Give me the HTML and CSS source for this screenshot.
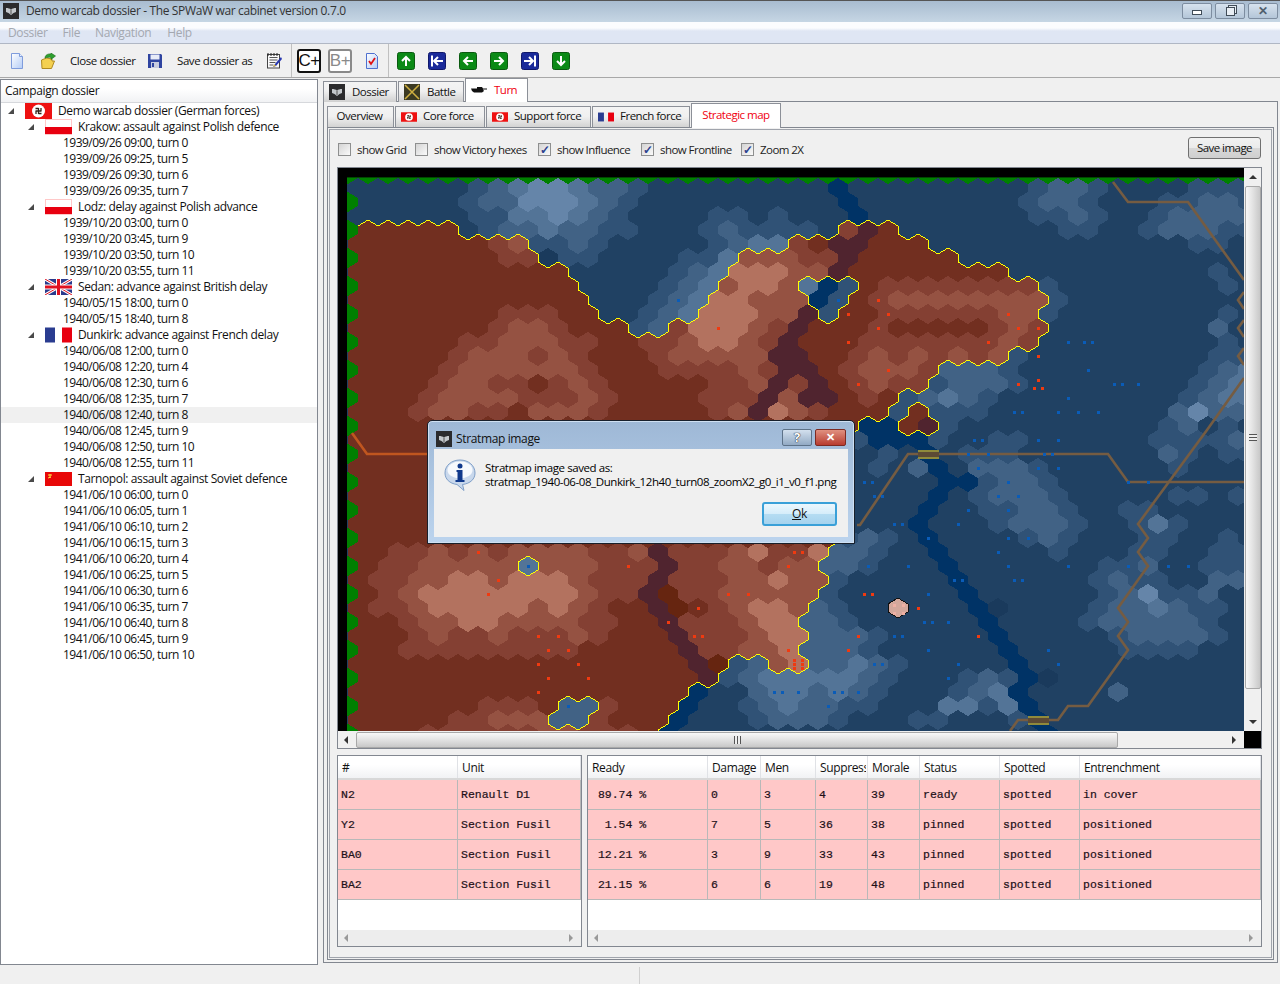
FILE: index.html
```html
<!DOCTYPE html>
<html lang="en">
<head>
<meta charset="utf-8">
<title>Demo warcab dossier - The SPWaW war cabinet version 0.7.0</title>
<link rel="stylesheet" href="styles.css">
</head>
<body>
<svg class="defs" width="0" height="0" aria-hidden="true">
  <linearGradient id="pg" x1="0" y1="0" x2="1" y2="1"><stop offset="0" stop-color="#ffffff"/><stop offset="1" stop-color="#b4ccf6"/></linearGradient>
  <symbol id="i-app" viewBox="0 0 16 16"><rect width="16" height="16" fill="#2b2b2d"/><path d="M3 5c2 0 4 .5 5 1.500C9 5.500 11 5 13 5v4l-2.500 1L8 12 5.500 10 3 9z" fill="#c4c8cc"/><path d="M8 6.500V11" stroke="#555" stroke-width="1"/></symbol>
  <symbol id="i-battle" viewBox="0 0 16 16"><rect width="16" height="16" fill="#3c3a22"/><path d="M1 1l14 14M15 1L1 15" stroke="#d0b040" stroke-width="1.500"/></symbol>
  <symbol id="i-tank" viewBox="0 0 16 16"><path d="M0 6.500h6V5h5l1 1.500h4v1h-4l1 1.500-2 1.500H3L1 9z" fill="#111"/></symbol>
  <symbol id="f-de" viewBox="0 0 27 16"><rect width="27" height="16" fill="#ee1111"/><circle cx="13.500" cy="8" r="6.500" fill="#fff"/><path d="M10.500 8h6M13.500 5v6M10.500 5.500h3M16.500 10.500h-3M11 11V8M16 5v3" stroke="#33241a" stroke-width="1.300" fill="none"/></symbol>
  <symbol id="f-pl" viewBox="0 0 27 16"><rect x=".5" y=".5" width="26" height="15" fill="#fff" stroke="#ffc8c8"/><rect y="8" width="27" height="7" fill="#e80010"/></symbol>
  <symbol id="f-uk" viewBox="0 0 27 16"><rect width="27" height="16" fill="#2a3a8c"/><path d="M0 0l27 16M27 0L0 16" stroke="#fff" stroke-width="3"/><path d="M0 0l27 16M27 0L0 16" stroke="#e01020" stroke-width="1"/><path d="M13.500 0v16M0 8h27" stroke="#fff" stroke-width="5"/><path d="M13.500 0v16M0 8h27" stroke="#e01020" stroke-width="3"/></symbol>
  <symbol id="f-fr" viewBox="0 0 27 16"><rect width="10" height="15" y=".5" fill="#2a3c90"/><rect x="17" y=".5" width="10" height="15" fill="#e80010"/></symbol>
  <symbol id="f-su" viewBox="0 0 27 16"><rect width="27" height="14" y="1" fill="#e80808"/><path d="M3 4h4M5 3v4M3 7l3-1" stroke="#ffe040" stroke-width="1" fill="none"/></symbol>
  <symbol id="t-new" viewBox="0 0 16 16"><path d="M2.500.5h8l3 3v12h-11z" fill="url(#pg)" stroke="#7f9cdc"/><path d="M10.500.5v3h3" fill="#e8f0ff" stroke="#7f9cdc"/></symbol>
  <symbol id="t-open" viewBox="0 0 16 16"><path d="M1.500 7l5-2 5.500 1v2h2.500l-3 7.500H2z" fill="#f4d050" stroke="#b08a20"/><path d="M5 5c0-3 3-4.500 6-4V0l4.500 3L11 6.500V4.500c-2-.5-4 0-6 .5z" fill="#2ea02e" stroke="#176a17" stroke-width=".6"/></symbol>
  <symbol id="t-save" viewBox="0 0 16 16"><path d="M1 1h13l1 1v13H1z" fill="#2f44a0"/><rect x="3.500" y="1.500" width="9" height="5" fill="#e8ecf8"/><rect x="4" y="9" width="8" height="6" fill="#c8cce0"/><rect x="5" y="10" width="2" height="4" fill="#2f44a0"/></symbol>
  <symbol id="t-notes" viewBox="0 0 16 16"><rect x="1.500" y="1.500" width="12" height="13.500" fill="#fafafa" stroke="#444"/><path d="M3.500 4.500h8M3.500 7h8M3.500 9.500h6M3.500 12h4" stroke="#555"/><path d="M2 0v3M5 0v3M8 0v3M11 0v3" stroke="#222"/><path d="M15 4l-6 7-2 3 3-1 6-7z" fill="#2838b0"/><path d="M7 14l1.500-2.500 1.500 1z" fill="#e8c020"/></symbol>
  <symbol id="t-check" viewBox="0 0 16 16"><path d="M2.500.5h8l3 3v12h-11z" fill="url(#pg)" stroke="#4f70cf"/><path d="M5 8l2 3 4-6" fill="none" stroke="#e01010" stroke-width="1.800"/></symbol>
  <symbol id="a-up" viewBox="0 0 18 18"><rect x=".5" y=".5" width="17" height="17" rx="2" fill="#0b8a16" stroke="#0a5a10"/><path d="M9 14V5M5 9l4-4 4 4" fill="none" stroke="#fff" stroke-width="2"/></symbol>
  <symbol id="a-down" viewBox="0 0 18 18"><rect x=".5" y=".5" width="17" height="17" rx="2" fill="#0b8a16" stroke="#0a5a10"/><path d="M9 4v9M5 9l4 4 4-4" fill="none" stroke="#fff" stroke-width="2"/></symbol>
  <symbol id="a-left" viewBox="0 0 18 18"><rect x=".5" y=".5" width="17" height="17" rx="2" fill="#0b8a16" stroke="#0a5a10"/><path d="M14 9H5M9 5L5 9l4 4" fill="none" stroke="#fff" stroke-width="2"/></symbol>
  <symbol id="a-right" viewBox="0 0 18 18"><rect x=".5" y=".5" width="17" height="17" rx="2" fill="#0b8a16" stroke="#0a5a10"/><path d="M4 9h9M9 5l4 4-4 4" fill="none" stroke="#fff" stroke-width="2"/></symbol>
  <symbol id="a-first" viewBox="0 0 18 18"><rect x=".5" y=".5" width="17" height="17" rx="2" fill="#1a2a9a" stroke="#10186a"/><path d="M4 3.500v11M15 9H6M10 5L6 9l4 4" fill="none" stroke="#fff" stroke-width="2"/></symbol>
  <symbol id="a-last" viewBox="0 0 18 18"><rect x=".5" y=".5" width="17" height="17" rx="2" fill="#1a2a9a" stroke="#10186a"/><path d="M14 3.500v11M3 9h9M8 5l4 4-4 4" fill="none" stroke="#fff" stroke-width="2"/></symbol>
  <symbol id="i-info" viewBox="0 0 32 32"><path d="M16 1C7.500 1 1 6.500 1 14c0 6 4.500 10.500 12 11.500l7 6-1.500-6C26.500 24.500 31 20 31 14 31 6.500 24.500 1 16 1z" fill="#c9d8ec" stroke="#7f9fc8"/><ellipse cx="16" cy="11" rx="12.500" ry="8.500" fill="#f6f9fd"/><circle cx="16" cy="7" r="2.500" fill="#10398c"/><path d="M12.500 11h6v10h2v2h-9v-2h2v-8h-1z" fill="#10398c"/></symbol>
</svg>

<header class="titlebar">
  <svg class="app-icon"><use href="#i-app"/></svg>
  <span class="title-text">Demo warcab dossier - The SPWaW war cabinet version 0.7.0</span>
  <div class="win-buttons">
    <span class="win-btn"><span class="glyph-min"></span></span>
    <span class="win-btn"><span class="glyph-max"></span></span>
    <span class="win-btn win-x">✕</span>
  </div>
</header>

<nav class="menubar">
  <span>Dossier</span><span>File</span><span>Navigation</span><span>Help</span>
</nav>

<div class="toolbar">
  <div class="tool-group group-file">
    <svg class="ticon i1"><use href="#t-new"/></svg>
    <svg class="ticon i2"><use href="#t-open"/></svg>
    <span class="tool-label l1">Close dossier</span>
    <svg class="ticon i3"><use href="#t-save"/></svg>
    <span class="tool-label l2">Save dossier as</span>
    <svg class="ticon i4"><use href="#t-notes"/></svg>
  </div>
  <div class="tool-group group-grade">
    <span class="grade on">C+</span>
    <span class="grade">B+</span>
    <svg class="ticon i5"><use href="#t-check"/></svg>
  </div>
  <div class="tool-group group-nav">
    <svg class="aicon"><use href="#a-up"/></svg>
    <svg class="aicon"><use href="#a-first"/></svg>
    <svg class="aicon"><use href="#a-left"/></svg>
    <svg class="aicon"><use href="#a-right"/></svg>
    <svg class="aicon"><use href="#a-last"/></svg>
    <svg class="aicon"><use href="#a-down"/></svg>
  </div>
</div>

<main class="main">
  <aside class="tree-pane">
    <div class="tree-head">Campaign dossier</div>
    <div class="tree">
      <div class="row lvl0"><i class="twist"></i><svg class="flag"><use href="#f-de"/></svg>Demo warcab dossier (German forces)</div>
      <div class="row lvl1"><i class="twist"></i><svg class="flag"><use href="#f-pl"/></svg>Krakow: assault against Polish defence</div>
      <div class="row leaf">1939/09/26 09:00, turn 0</div>
      <div class="row leaf">1939/09/26 09:25, turn 5</div>
      <div class="row leaf">1939/09/26 09:30, turn 6</div>
      <div class="row leaf">1939/09/26 09:35, turn 7</div>
      <div class="row lvl1"><i class="twist"></i><svg class="flag"><use href="#f-pl"/></svg>Lodz: delay against Polish advance</div>
      <div class="row leaf">1939/10/20 03:00, turn 0</div>
      <div class="row leaf">1939/10/20 03:45, turn 9</div>
      <div class="row leaf">1939/10/20 03:50, turn 10</div>
      <div class="row leaf">1939/10/20 03:55, turn 11</div>
      <div class="row lvl1"><i class="twist"></i><svg class="flag"><use href="#f-uk"/></svg>Sedan: advance against British delay</div>
      <div class="row leaf">1940/05/15 18:00, turn 0</div>
      <div class="row leaf">1940/05/15 18:40, turn 8</div>
      <div class="row lvl1"><i class="twist"></i><svg class="flag"><use href="#f-fr"/></svg>Dunkirk: advance against French delay</div>
      <div class="row leaf">1940/06/08 12:00, turn 0</div>
      <div class="row leaf">1940/06/08 12:20, turn 4</div>
      <div class="row leaf">1940/06/08 12:30, turn 6</div>
      <div class="row leaf">1940/06/08 12:35, turn 7</div>
      <div class="row leaf selected">1940/06/08 12:40, turn 8</div>
      <div class="row leaf">1940/06/08 12:45, turn 9</div>
      <div class="row leaf">1940/06/08 12:50, turn 10</div>
      <div class="row leaf">1940/06/08 12:55, turn 11</div>
      <div class="row lvl1"><i class="twist"></i><svg class="flag"><use href="#f-su"/></svg>Tarnopol: assault against Soviet defence</div>
      <div class="row leaf">1941/06/10 06:00, turn 0</div>
      <div class="row leaf">1941/06/10 06:05, turn 1</div>
      <div class="row leaf">1941/06/10 06:10, turn 2</div>
      <div class="row leaf">1941/06/10 06:15, turn 3</div>
      <div class="row leaf">1941/06/10 06:20, turn 4</div>
      <div class="row leaf">1941/06/10 06:25, turn 5</div>
      <div class="row leaf">1941/06/10 06:30, turn 6</div>
      <div class="row leaf">1941/06/10 06:35, turn 7</div>
      <div class="row leaf">1941/06/10 06:40, turn 8</div>
      <div class="row leaf">1941/06/10 06:45, turn 9</div>
      <div class="row leaf">1941/06/10 06:50, turn 10</div>
    </div>
  </aside>

  <section class="right">
    <div class="tabs outer-tabs">
      <span class="tab t-dossier"><svg class="tab-icon"><use href="#i-app"/></svg>Dossier</span>
      <span class="tab t-battle"><svg class="tab-icon"><use href="#i-battle"/></svg>Battle</span>
      <span class="tab t-turn active"><svg class="tab-icon"><use href="#i-tank"/></svg>Turn</span>
    </div>
    <div class="outer-pane">
      <div class="tabs inner-tabs">
        <span class="tab t-over">Overview</span>
        <span class="tab t-core"><svg class="tab-flag"><use href="#f-de"/></svg>Core force</span>
        <span class="tab t-supp"><svg class="tab-flag"><use href="#f-de"/></svg>Support force</span>
        <span class="tab t-fren"><svg class="tab-flag"><use href="#f-fr"/></svg>French force</span>
        <span class="tab t-strat active">Strategic map</span>
      </div>
      <div class="inner-pane">
        <div class="options">
          <label class="opt o1"><i class="cb"></i>show Grid</label>
          <label class="opt o2"><i class="cb"></i>show Victory hexes</label>
          <label class="opt o3"><i class="cb checked">✓</i>show Influence</label>
          <label class="opt o4"><i class="cb checked">✓</i>show Frontline</label>
          <label class="opt o5"><i class="cb checked">✓</i>Zoom 2X</label>
          <span class="btn save-btn">Save image</span>
        </div>
        <div class="map-frame">
          <svg id="map" class="map" viewBox="338 168 906 563" width="906" height="563" shape-rendering="crispEdges"></svg>
          <div class="vscroll">
            <span class="arrow up"></span>
            <span class="vthumb"><span class="vgrip"></span></span>
            <span class="arrow down"></span>
          </div>
          <div class="hscroll">
            <span class="arrow left"></span>
            <span class="hthumb"><span class="hgrip"></span></span>
            <span class="arrow right"></span>
          </div>
          <div class="corner"></div>
        </div>
        <div class="tables">
          <div class="table table-a">
            <div class="thead cols-a"><span>#</span><span>Unit</span></div>
            <div class="trow cols-a"><span>N2</span><span>Renault D1</span></div>
            <div class="trow cols-a"><span>Y2</span><span>Section Fusil</span></div>
            <div class="trow cols-a"><span>BA0</span><span>Section Fusil</span></div>
            <div class="trow cols-a"><span>BA2</span><span>Section Fusil</span></div>
            <div class="tscroll"><span class="arrow left dim"></span><span class="arrow right dim"></span></div>
          </div>
          <div class="table table-b">
            <div class="thead cols-b"><span>Ready</span><span>Damage</span><span>Men</span><span><b class="clip">Suppress</b></span><span>Morale</span><span>Status</span><span>Spotted</span><span>Entrenchment</span></div>
            <div class="trow cols-b"><span> 89.74 %</span><span>0</span><span>3</span><span>4</span><span>39</span><span>ready</span><span>spotted</span><span>in cover</span></div>
            <div class="trow cols-b"><span>  1.54 %</span><span>7</span><span>5</span><span>36</span><span>38</span><span>pinned</span><span>spotted</span><span>positioned</span></div>
            <div class="trow cols-b"><span> 12.21 %</span><span>3</span><span>9</span><span>33</span><span>43</span><span>pinned</span><span>spotted</span><span>positioned</span></div>
            <div class="trow cols-b"><span> 21.15 %</span><span>6</span><span>6</span><span>19</span><span>48</span><span>pinned</span><span>spotted</span><span>positioned</span></div>
            <div class="tscroll"><span class="arrow left dim"></span><span class="arrow right dim"></span></div>
          </div>
        </div>
      </div>
    </div>
  </section>
</main>

<footer class="statusbar"><span class="status-sep"></span></footer>

<div class="dialog">
  <div class="dlg-title">
    <svg class="app-icon"><use href="#i-app"/></svg>
    <span class="dlg-caption">Stratmap image</span>
    <span class="dlg-help">?</span>
    <span class="dlg-close">✕</span>
  </div>
  <div class="dlg-body">
    <div class="dlg-msg">
      <svg class="dlg-info"><use href="#i-info"/></svg>
      <p>Stratmap image saved as:<br>stratmap_1940-06-08_Dunkirk_12h40_turn08_zoomX2_g0_i1_v0_f1.png</p>
    </div>
    <div class="dlg-actions"><span class="btn ok-btn"><u>O</u>k</span></div>
  </div>
</div>

<script src="map.js"></script>
</body>
</html>
```

FILE: styles.css
```css
* { box-sizing: border-box; }
html, body { margin: 0; height: 100%; }
body {
  width: 1280px; height: 984px; overflow: hidden; position: relative;
  display: flex; flex-direction: column;
  background: #f0f0f0; color: #111;
  font: 12px/16px "Open Sans", "Noto Sans", sans-serif;
  letter-spacing: -.36px;
}
.defs { position: absolute; }

.titlebar {
  height: 22px; flex: none; display: flex; align-items: center; padding: 0 2px 2px 3px;
  background: linear-gradient(#a8bcd0, #c6d6e4); border-top: 1px solid #555;
}
.app-icon { width: 16px; height: 16px; flex: none; }
.title-text { margin-left: 7px; color: #333; }
.win-buttons { margin-left: auto; display: flex; gap: 3px; margin-top: 1px; }
.win-btn {
  width: 30px; height: 16px; border: 1px solid #7d8da0; border-radius: 2px;
  background: linear-gradient(#d6e2ee, #b4c6d8); display: flex; align-items: center; justify-content: center;
  color: #50606e; font-size: 12px; font-weight: 700;
}
.glyph-min { width: 10px; height: 5px; border: 1px solid #404c58; background: #fff; margin-top: 3px; }
.glyph-max { width: 9px; height: 9px; border: 1px solid #404c58; background: #e8eef4; box-shadow: 2px -2px 0 -1px #e8eef4, 2px -2px 0 0 #404c58; }

.menubar {
  height: 22px; flex: none; display: flex; padding: 3px 0 0 8px; gap: 15px; color: #a4a8b0;
  background: linear-gradient(#fbfcfe 0, #fbfcfe 6px, #dfe6f4 9px, #dfe6f4 100%);
  border-bottom: 1px solid #b0b7c4;
}
.menubar span:last-child { margin-left: 1px; }

.toolbar {
  height: 34px; flex: none; display: flex; border-bottom: 1px solid #a8a8a8;
}
.tool-group { display: flex; align-items: center; border-right: 1px solid #c0c0c0; }
.group-file { width: 292px; padding-left: 9px; }
.group-grade { width: 97px; padding-left: 5px; }
.group-nav { padding-left: 8px; gap: 13px; border-right: 0; }
.ticon { width: 16px; height: 16px; flex: none; }
.i2 { margin-left: 15px; }
.tool-label { color: #111; white-space: nowrap; flex: none; font-size: 11.500px; letter-spacing: -.42px; }
.l1 { margin-left: 14px; width: 63px; }
.i3 { margin-left: 14px; }
.l2 { margin-left: 14px; width: 76px; }
.i4 { margin-left: 13px; }
.grade {
  width: 24px; height: 24px; border: 2px solid #111; border-radius: 3px; background: #fff;
  display: flex; align-items: center; justify-content: center; font-size: 17px; letter-spacing: -.5px;
  color: #111; margin-right: 7px; font-family: "Liberation Sans", sans-serif; flex: none;
}
.grade:not(.on) { border: 2px solid #8a8a8a; color: #8a8a8a; }
.i5 { margin-left: 5px; }
.aicon { width: 18px; height: 18px; flex: none; }

.main { flex: 1; min-height: 0; display: flex; padding-top: 1px; }
.tree-pane { width: 318px; flex: none; border: 1px solid #828790; background: #fff; }
.tree-head { height: 23px; line-height: 21px; padding-left: 4px; border-bottom: 1px solid #d6d8dc; background: linear-gradient(#fff, #fff 40%, #f1f2f4); }
.row { height: 16px; display: flex; align-items: center; white-space: nowrap; letter-spacing: -.38px; }
.lvl0 { padding-left: 7px; }
.lvl1 { padding-left: 27px; }
.leaf { padding-left: 62px; letter-spacing: -.53px; }
.selected { background: #f0f0f0; }
.twist { width: 0; height: 0; border-style: solid; border-width: 0 0 6px 6px; border-color: transparent transparent #4a4a4a transparent; margin-right: 11px; flex: none; }
.flag { width: 27px; height: 16px; margin-right: 6px; flex: none; }

.right { margin-left: 5px; width: 955px; display: flex; flex-direction: column; }
.tabs { display: flex; align-items: flex-end; flex: none; position: relative; }
.tab {
  display: flex; align-items: center; border: 1px solid #8c9098; border-bottom: 0; margin-right: 1px; white-space: nowrap;
  background: linear-gradient(#f4f4f4, #f0f0f0 45%, #d0d0d0); font-size: 11.500px; letter-spacing: -.5px;
}
.tab.active { background: #fff; color: #f00010; z-index: 1; }
.outer-tabs { height: 23px; margin-bottom: -1px; }
.outer-tabs .tab { height: 21px; }
.outer-tabs .tab.active { height: 24px; padding-bottom: 1px; }
.tab-icon { width: 16px; height: 16px; margin: 0 7px 0 5px; flex: none; }
.t-dossier { width: 74px; }
.t-battle { width: 66px; }
.t-turn { width: 63px; }
.outer-pane { height: 862px; border: 1px solid #828790; background: #f0f0f0; padding: 3px 3px 0 3px; flex: none; }
.inner-tabs { height: 23px; margin-bottom: -1px; }
.inner-tabs .tab { height: 22px; justify-content: center; padding-bottom: 4px; }
.inner-tabs .tab.active { height: 25px; padding-bottom: 3px; }
.inner-tabs .t-over { width: 67px; padding-right: 2px; }
.inner-tabs .t-core { width: 90px; justify-content: flex-start; padding-left: 5px; }
.inner-tabs .t-supp { width: 105px; justify-content: flex-start; padding-left: 5px; }
.inner-tabs .t-fren { width: 98px; justify-content: flex-start; padding-left: 5px; }
.t-strat { width: 90px; }
.tab-flag { width: 16px; height: 10px; margin-right: 6px; flex: none; margin-top: 2px; }
.inner-pane {
  height: 833px; border: 1px solid #828790; padding: 0 10px 0 9px; position: relative;
  display: flex; flex-direction: column;
  box-shadow: inset 0 0 0 1px #f0f0f0, inset 0 0 0 2px #a0a4ac;
}
.options { height: 39px; flex: none; display: flex; align-items: center; padding-top: 4px; position: relative; font-size: 11.500px; letter-spacing: -.55px; }
.opt { display: flex; align-items: center; color: #222; }
.cb {
  width: 13px; height: 13px; border: 1px solid #8e8f8f; background: linear-gradient(135deg, #d4d4d4, #fafafa);
  margin-right: 6px; font-style: normal; font-size: 12px; line-height: 11px; text-align: center; color: #2a3f8e; font-weight: 700; margin-left: 1px; letter-spacing: 0;
}
.o1 { width: 77px; }
.o2 { width: 123px; }
.o3 { width: 103px; }
.o4 { width: 100px; }
.btn {
  display: flex; align-items: center; justify-content: center; border: 1px solid #707070; border-radius: 3px;
  background: linear-gradient(#f2f2f2 0, #ebebeb 48%, #d8d8d8 52%, #cfcfcf 100%);
}
.save-btn { margin-left: auto; width: 73px; height: 22px; margin-right: 2px; margin-top: -3px; }

.map-frame {
  width: 925px; height: 582px; flex: none; border: 1px solid #828790; display: grid;
  grid-template-columns: 906px 17px; grid-template-rows: 563px 17px; background: #f0f0f0;
}
.map { display: block; background: #000; }
.vscroll { display: flex; flex-direction: column; align-items: center; background: #f0f0f0; }
.hscroll { display: flex; align-items: center; background: #f0f0f0; }
.corner { background: #000; }
.arrow { width: 0; height: 0; border-style: solid; flex: none; }
.arrow.up { border-width: 0 4px 4px; border-color: transparent transparent #333; margin: 7px 0 7px; }
.arrow.down { border-width: 4px 4px 0; border-color: #333 transparent transparent; margin: auto 0 7px; }
.arrow.left { border-width: 4px 4px 4px 0; border-color: transparent #333 transparent transparent; margin: 0 0 0 6px; }
.arrow.right { border-width: 4px 0 4px 4px; border-color: transparent transparent transparent #333; margin: 0 8px 0 auto; }
.arrow.dim { opacity: .45; }
.vthumb { width: 16px; height: 503px; border: 1px solid #a8a8a8; border-radius: 2px; background: linear-gradient(90deg, #f8f8f8, #e4e4e4 45%, #c8c8c8); display: flex; align-items: center; justify-content: center; }
.hthumb { width: 762px; height: 16px; margin-left: 8px; border: 1px solid #a8a8a8; border-radius: 2px; background: linear-gradient(#f8f8f8, #e4e4e4 45%, #c8c8c8); display: flex; align-items: center; justify-content: center; }
.vgrip { width: 8px; height: 7px; background: repeating-linear-gradient(#555 0 1px, #eee 1px 3px); }
.hgrip { width: 7px; height: 8px; background: repeating-linear-gradient(90deg, #555 0 1px, #eee 1px 3px); }

.tables { display: flex; gap: 5px; margin-top: 6px; flex: none; height: 192px; }
.table { border: 1px solid #828790; background: #fff; display: flex; flex-direction: column; position: relative; }
.table-a { width: 245px; }
.table-b { width: 675px; }
.cols-a, .cols-b { display: grid; }
.cols-a { grid-template-columns: 120px 1fr; }
.cols-b { grid-template-columns: 120px 53px 55px 52px 52px 80px 80px 1fr; }
.thead { height: 24px; background: linear-gradient(#fff, #fff 40%, #f1f2f4); border-bottom: 2px solid #d8d8d8; line-height: 24px; }
.thead span { padding-left: 4px; border-right: 1px solid #e0e2e6; overflow: hidden; white-space: nowrap; }
.clip { display: block; width: 46px; overflow: hidden; font-weight: 400; }
.trow { height: 30px; background: #ffc8c8; border-bottom: 1px solid #b8b8b8; }
.trow span { padding-left: 3px; border-right: 1px solid #b8b8b8; white-space: pre; color: #221018; font: 11.500px/29px "Liberation Mono", monospace; letter-spacing: 0; -webkit-text-stroke: .2px #221018; }
.tscroll { margin-top: auto; height: 16px; background: #ededed; display: flex; align-items: center; }

.statusbar { height: 19px; flex: none; display: flex; padding-left: 639px; padding-top: 2px; }
.status-sep { width: 1px; height: 17px; background: #d0d0d0; }

.dialog {
  position: absolute; left: 427px; top: 420px; width: 428px; height: 124px;
  border: 1px solid #18202c; border-radius: 5px 5px 0 0; padding: 0 6px 6px 6px;
  background: linear-gradient(#9eb8d6, #bcd4ee); box-shadow: inset 0 0 0 1px #cfe0f2;
  display: flex; flex-direction: column;
}
.dlg-title { height: 28px; flex: none; display: flex; align-items: center; padding: 8px 2px 0 2px; }
.dlg-caption { margin-left: 4px; color: #111; }
.dlg-help, .dlg-close { height: 17px; display: flex; align-items: center; justify-content: center; border: 1px solid #5d7288; border-radius: 2px; font-weight: 700; margin-top: -4px; }
.dlg-help { width: 30px; margin-left: auto; background: linear-gradient(#d3e0ee, #92aac4); color: #fff; text-shadow: 0 0 1px #112, 0 0 1px #112; font-size: 13px; }
.dlg-close { width: 31px; margin-left: 3px; background: linear-gradient(#e09080, #b83c30); color: #fff; font-size: 11px; border-color: #7d2a22; }
.dlg-body { flex: 1; background: #f0f0f0; display: flex; flex-direction: column; }
.dlg-msg { display: flex; padding: 10px 0 0 10px; height: 53px; flex: none; }
.dlg-info { width: 32px; height: 32px; flex: none; }
.dlg-msg p { margin: 0 0 0 9px; line-height: 14px; padding-top: 2px; white-space: nowrap; font-size: 11.500px; letter-spacing: -.41px; color: #000; }
.dlg-actions { display: flex; justify-content: flex-end; padding-right: 11px; }
.ok-btn { width: 75px; height: 24px; border: 2px solid #3aa0d8; background: linear-gradient(#ecf7fd, #d6edfa 48%, #b5dcf2 52%, #a6d3ee); }
```

FILE: map.js
```js
// Strategic map: hex terrain drawn from a compact description of each row.
// Row format: "<fill> <col> <chars> <col> <chars> ..."
// a-e blue levels, z dark blue, r river; 0-3 brown levels, x dark river, y deep brown.
var Z24 = '000000000000000000000000', Z25 = Z24 + '0', Z17 = '00000000000000000';
var ROWS = [
  "a 6 bcdeedccb 24 r 34 bccb 42 bbb",
  "a 6 bcceeedcb 25 r 34 bccb 41 bbccb",
  "a 6 bbddedcb 18 bb 21 b 25 r 34 bbcb 40 bcccc",
  "a 1 00000 6 abccdccbb 18 bcbbb 23 ba1x0 36 bb 40 bcccbb",
  "a 0 0000000 7 12 9 bbcb 18 bcdd 22 10xx000 42 bb",
  "a 1 000000011 10 zbb 17 bbd222 23 11x00000",
  "a 0 00000000000 16 bcd3332 23 2x 25 00000000 43 b",
  "a 1 00000000000 16 bcd2332 23 drb0 27 11111111 35 b 44 b",
  "a 0 000000000000 15 bcd33222 23 rb 25 0 26 1 27 22222222 35 b",
  "a 1 0000000 8 111 11 00 15 bcd333 21 22x 24 b 25 00 27 111111 33 22 35 b 44 b",
  "a 0 0000000 7 1221 11 000 14 bc 16 1 17 3332 21 1x 23 000 26 1 27 00000 32 1 33 2 34 1 43 c",
  "a 1 00000 6 1122211 13 00 15 11 17 2 18 33 20 21x 23 000 26 1111111 33 21 44 b",
  "a 0 00000 5 1222121 12 000 15 12222 20 2xx 23 001 26 2121212 33 b 43 bb",
  "a 1 0000 5 1222222 12 1 13 000 16 1111 20 21xx 24 01 26 222 29 1 30 cccb 43 bcd",
  "a 0 0000 4 122110121 13 00000 18 112x1 23 x01211 29 bcccb 42 bcd",
  "a 1 000 4 1222211121 14 0000 18 111x2 23 xx010 28 bcdcb 42 bcdd",
  "a 0 000 3 1221102221 13 00000 18 12x32 23 1000 27 b0b 30 bb 41 cecc",
  "a 1 " + Z25 + " 26 rr0x 30 b 41 b 42 c 44 b",
  "a 0 " + Z25 + " 25 brrrb 32 bb 40 bbbbc",
  "a 1 " + Z24 + " 27 b 29 r 31 bbb 41 cb 44 bb",
  "a 0 " + Z25 + " 26 b 28 cr 31 cccb 41 b",
  "a 1 " + Z24 + " 30 rr 32 bccb",
  "a 0 " + Z25 + " 29 r 31 bcccb 41 bb 44 b",
  "a 1 " + Z24 + " 29 r 32 bbccb 39 bb",
  "a 0 " + Z25 + " 28 r 32 bcccb 39 bdb",
  "a 1 " + Z24 + " 25 bcb 29 r 34 bcb 40 bb 44 b",
  "a 0 00112121222211 14 2x111 19 23113 24 ccb 29 r 35 b 39 bb 43 bb",
  "a 1 01122222 9 d 10 222111x11 19 22122 24 ccb 30 r 38 bbc 43 bbb",
  "a 0 01122332333211 14 1x111 19 22322 24 b 30 r 37 bcbb 43 cc",
  "a 1 012 4 33333333 12 211xy11 19 22222 24 b 31 r 38 bceb 42 bc",
  "a 0 0112 4 33333 9 232100xy 17 012332 23 cb 31 rz 37 bccdcbb",
  "a 1 00122332222 12 1100x111 20 233 23 ccb 32 r 37 bcccccb",
  "a 0 0001211211121000x111233 23 cccb 32 r 38 bccccb",
  "a 1 00 3 111111111 12 00000 17 x11223 23 cccb 33 r 39 bbbb",
  "a 0 " + Z17 + " 17 xybc23 23 ccdcb 33 r",
  "a 1 " + Z17 + " 18 xbcdd 23 dddcb 31 bcb 34 rz",
  "a 0 " + Z17 + " 17 raacdd 23 cdcb 30 bcdr 38 c",
  "a 1 000000 7 1110cc1000 17 raabcd 23 ccbb 30 ddbdr",
  "a 0 00000 5 11222cc1000 16 raaabcc 23 cb 28 bb 33 br",
  "a 1 00011111122111 15 0 16 r 35 r"
];
var COLORS = {
  a: '#204163', b: '#305276', c: '#416285', d: '#537497', e: '#6585a9', z: '#1a3a5c', r: '#003366',
  '0': '#722f20', '1': '#844033', '2': '#955242', '3': '#b3725f', x: '#50242f', y: '#662510', g: '#008000'
};
var cells = new Map();
ROWS.forEach(function (spec, r) {
  var parts = spec.split(' '), odd = r % 2 === 1, line = [];
  var count = odd ? 46 : 45;
  for (var i = 0; i < count; i++) line[i] = parts[0];
  for (var p = 1; p + 1 < parts.length; p += 2) {
    var at = +parts[p];
    for (var k = 0; k < parts[p + 1].length; k++) line[at + k] = parts[p + 1][k];
  }
  if (odd) line[0] = 'g';
  line.forEach(function (ch, c) {
    var x = (odd ? 348 : 358) + 20 * c, y = 188 + 14 * r;
    cells.set(x + ',' + y, { x: x, y: y, ch: ch });
  });
});
function hex(x, y, fill) {
  return '<polygon fill="' + fill + '" points="' + x + ',' + (y - 10) + ' ' + (x + 10) + ',' + (y - 4) + ' ' + (x + 10) + ',' + (y + 4) +
    ' ' + x + ',' + (y + 10) + ' ' + (x - 10) + ',' + (y + 4) + ' ' + (x - 10) + ',' + (y - 4) + '"/>';
}
var out = ['<rect x="347" y="178" width="897" height="553" fill="#204163"/>'];
for (var gx = 348; gx < 1260; gx += 20) out.push(hex(gx, 174, '#008000'));
cells.forEach(function (h) { out.push(hex(h.x, h.y, COLORS[h.ch])); });

// Roads and bridges
var roads = [
  '1113,182 1128,202 1188,202 1244,280',
  '1244,292 1238,300 1244,309',
  '1244,320 1238,328 1244,337',
  '1244,348 1238,356 1244,365',
  '1244,378 1207,430 1138,524 1148,538 1138,552 1148,566 1118,608 1128,622 1118,636 1128,650 1088,706 1068,706 1058,720 1018,720 1010,731',
  '857,525 860,525 908,454 1108,454 1128,482 1244,482'
];
out.push('<g fill="none" stroke="#755c42" stroke-width="2.600" shape-rendering="auto">');
roads.forEach(function (pts) { out.push('<polyline points="' + pts + '"/>'); });
out.push('</g><polyline points="352,433 367,454 427,454" fill="none" stroke="#c0561f" stroke-width="2.600" shape-rendering="auto"/>');
[[918, 450], [1028, 716]].forEach(function (b) {
  out.push('<rect x="' + b[0] + '" y="' + b[1] + '" width="21" height="9" fill="#8f8a3b"/><rect x="' + b[0] + '" y="' + (b[1] + 2) + '" width="21" height="5" fill="#5c4a35"/>');
});

// Frontline: every edge between a blue hex and a brown hex
var brown = /[0-3xy]/, blue = /[a-erz]/;
var EDGES = [
  [20, 0, 10, -4, 10, 4], [10, 14, 10, 4, 0, 10], [-10, 14, 0, 10, -10, 4],
  [-20, 0, -10, 4, -10, -4], [-10, -14, -10, -4, 0, -10], [10, -14, 0, -10, 10, -4]
];
out.push('<g stroke="#ffff00" stroke-width="1" fill="none">');
cells.forEach(function (h) {
  if (!brown.test(h.ch)) return;
  EDGES.forEach(function (e) {
    var n = cells.get((h.x + e[0]) + ',' + (h.y + e[1]));
    if (n && blue.test(n.ch)) {
      out.push('<line x1="' + (h.x + e[2]) + '" y1="' + (h.y + e[3]) + '" x2="' + (h.x + e[4]) + '" y2="' + (h.y + e[5]) + '"/>');
    }
  });
});
out.push('</g>');

// Unit markers, given as x,y in map pixels grouped by colour
function dots(list, ox, oy, color) {
  list.forEach(function (d) {
    out.push('<rect x="' + Math.round(ox + d[0] / 3 - 1) + '" y="' + Math.round(oy + d[1] / 3 - 1) + '" width="3" height="3" fill="' + color + '"/>');
  });
}
var RED = '#f03a10', BLU = '#0a5cb8';
dots([[1135, 490]], 340, 165, RED);
dots([[1015, 406]], 340, 165, BLU);
dots([[235,406],[145,448],[265,448],[625,448],[235,490],[655,490],[715,490],[145,532],[565,532],[715,574],[265,616],[175,658],[715,646],[655,658],[703,670],[727,670]], 800, 165, RED);
dots([[115,406],[805,532],[853,532],[877,532],[865,616],[943,658],[967,658],[1015,658],[805,700],[643,742],[667,742],[775,742],[835,742],[895,742]], 800, 165, BLU);
dots([[523,31],[547,31],[715,31],[775,31],[505,73],[565,73],[733,73],[757,73],[535,115],[715,115],[775,115],[193,157],[217,157],[625,157],[985,157],[1045,157],[223,199],[247,199],[595,199],[655,199],[505,241],[625,241],[283,283],[307,283],[475,283],[385,325],[625,325],[685,325],[595,367],[205,409],[325,409],[625,409],[805,409],[985,409],[1105,409],[1165,409],[463,451],[487,451],[643,451],[667,451],[385,493],[373,577],[397,577],[445,577],[283,619],[307,619],[385,661],[745,661],[223,703],[247,703],[475,703],[775,703],[445,745],[103,787],[127,787],[175,787],[85,829]], 800, 430, BLU);
dots([[7,367],[193,493],[217,493],[355,535],[175,619],[535,619],[145,661],[7,691],[7,703],[7,715]], 800, 430, RED);
dots([[415,37],[865,79],[475,121],[445,163],[1165,163],[1225,163],[1075,205],[985,247],[595,289],[655,289],[1063,289],[1087,289],[625,331],[685,331],[1345,331],[595,373],[715,373],[625,415],[745,415],[595,457],[1363,37],[1345,79],[1363,361],[1363,373],[1363,385]], 340, 540, RED);
dots([[565,79],[685,499],[1303,457],[1327,457],[1375,457]], 340, 540, BLU);

// Selected unit
out.push('<polygon points="898,598 908,604 908,612 898,618 888,612 888,604" fill="#d4a89c" stroke="#111" stroke-width="1"/>');
[[893,604],[902,604],[893,612],[902,612]].forEach(function (d) {
  out.push('<rect x="' + d[0] + '" y="' + d[1] + '" width="3" height="3" fill="#eeb0a4"/>');
});

// Border around the playable area
out.push('<rect x="338" y="168" width="906" height="10" fill="#000"/><rect x="338" y="168" width="9" height="563" fill="#000"/><rect x="347" y="177" width="897" height="1" fill="#004a00"/>');
document.getElementById('map').innerHTML = out.join('');
```
